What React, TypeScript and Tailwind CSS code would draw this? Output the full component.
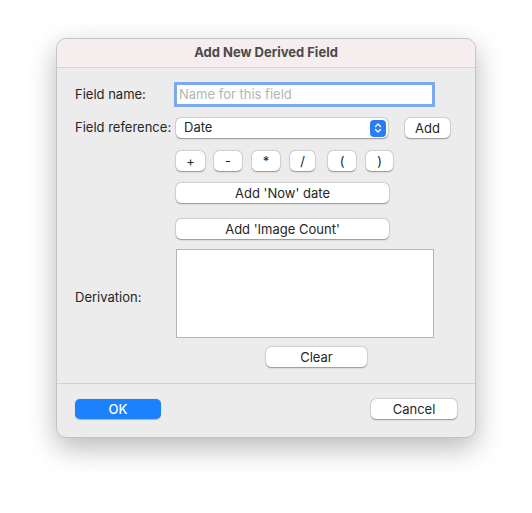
import React from 'react'

const font = { fontFamily: 'Inter, Roboto, "Liberation Sans", sans-serif' }

function MacButton({ className = '', children }: { className?: string; children: React.ReactNode }) {
  return (
    <button
      className={`h-[20px] rounded-[5px] bg-white text-[13px] leading-none text-[#262626] shadow-[0_0.5px_1.5px_rgba(0,0,0,0.35),0_0_0_0.5px_rgba(0,0,0,0.12)] flex items-center justify-center ${className}`}
    >
      {children}
    </button>
  )
}

function Stepper() {
  return (
    <div className="w-[16px] h-[17px] rounded-[4px] bg-[#2a7df6] flex items-center justify-center">
      <svg width="8" height="12" viewBox="0 0 8 12" fill="none">
        <path d="M1.5 4.5 L4 2 L6.5 4.5" stroke="white" strokeWidth="1.4" strokeLinecap="round" strokeLinejoin="round" />
        <path d="M1.5 7.5 L4 10 L6.5 7.5" stroke="white" strokeWidth="1.4" strokeLinecap="round" strokeLinejoin="round" />
      </svg>
    </div>
  )
}

export default function App() {
  const ops = [
    { label: '+', w: 'w-[29px]' },
    { label: '-', w: 'w-[28px]' },
    { label: '*', w: 'w-[28px]' },
    { label: '/', w: 'w-[25px]' },
    { label: '(', w: 'w-[28px]' },
    { label: ')', w: 'w-[27px]' },
  ]

  return (
    <div className="min-h-[513px] w-[532px] bg-white pt-[38px] pl-[56px]" style={font}>
      <div className="w-[420px] h-[400px] rounded-[10px] bg-[#ececec] border border-[#c4c4c4] shadow-[0_10px_28px_rgba(0,0,0,0.28)] overflow-hidden flex flex-col">
        {/* title bar */}
        <div className="h-[29px] shrink-0 bg-[#f6eeee] border-b border-[#d4d4d4] flex items-center justify-center text-[13px] font-bold text-[#4a4a4a]">
          Add New Derived Field
        </div>

        <div className="flex flex-col pl-[18px] text-[13px] text-[#262626]">
          {/* field name */}
          <div className="mt-[17px] flex items-center h-[19px]">
            <div className="w-[101px]">Field name:</div>
            <input
              placeholder="Name for this field"
              className="ml-[1px] w-[255px] h-[19px] bg-white px-[2px] text-[13px] outline-none ring-[3px] ring-[#7da9ef] placeholder:text-[#b4b4b4]"
            />
          </div>

          {/* field reference */}
          <div className="mt-[14px] flex items-center h-[20px]">
            <div className="w-[101px]">Field reference:</div>
            <div className="w-[212px] h-[20px] rounded-[5px] bg-white shadow-[0_0.5px_1.5px_rgba(0,0,0,0.35),0_0_0_0.5px_rgba(0,0,0,0.12)] flex items-center justify-between pl-[8px] pr-[2px]">
              <span>Date</span>
              <Stepper />
            </div>
            <MacButton className="ml-[17px] w-[45px]">Add</MacButton>
          </div>

          {/* operators */}
          <div className="mt-[13px] ml-[101px] grid grid-cols-[repeat(6,38px)]">
            {ops.map((op) => (
              <MacButton key={op.label} className={op.w}>
                {op.label}
              </MacButton>
            ))}
          </div>

          <MacButton className="mt-[12px] ml-[101px] w-[213px]">Add 'Now' date</MacButton>
          <MacButton className="mt-[16px] ml-[101px] w-[213px]">Add 'Image Count'</MacButton>

          {/* derivation */}
          <div className="mt-[10px] flex items-center">
            <div className="w-[101px] pt-[9px]">Derivation:</div>
            <textarea className="w-[258px] h-[89px] bg-white border border-[#b5b5b5] resize-none outline-none" />
          </div>

          <MacButton className="mt-[9px] ml-[191px] w-[101px]">Clear</MacButton>
        </div>

        <div className="mt-[16px] h-px bg-[#d2d2d2]" />

        <div className="mt-[15px] px-[18px] flex justify-between">
          <button className="w-[86px] h-[20px] rounded-[5px] bg-[#1b82fb] text-white text-[13px] font-medium leading-none flex items-center justify-center shadow-[0_0.5px_1px_rgba(0,0,0,0.25)]">
            OK
          </button>
          <MacButton className="w-[86px]">Cancel</MacButton>
        </div>
      </div>
    </div>
  )
}
